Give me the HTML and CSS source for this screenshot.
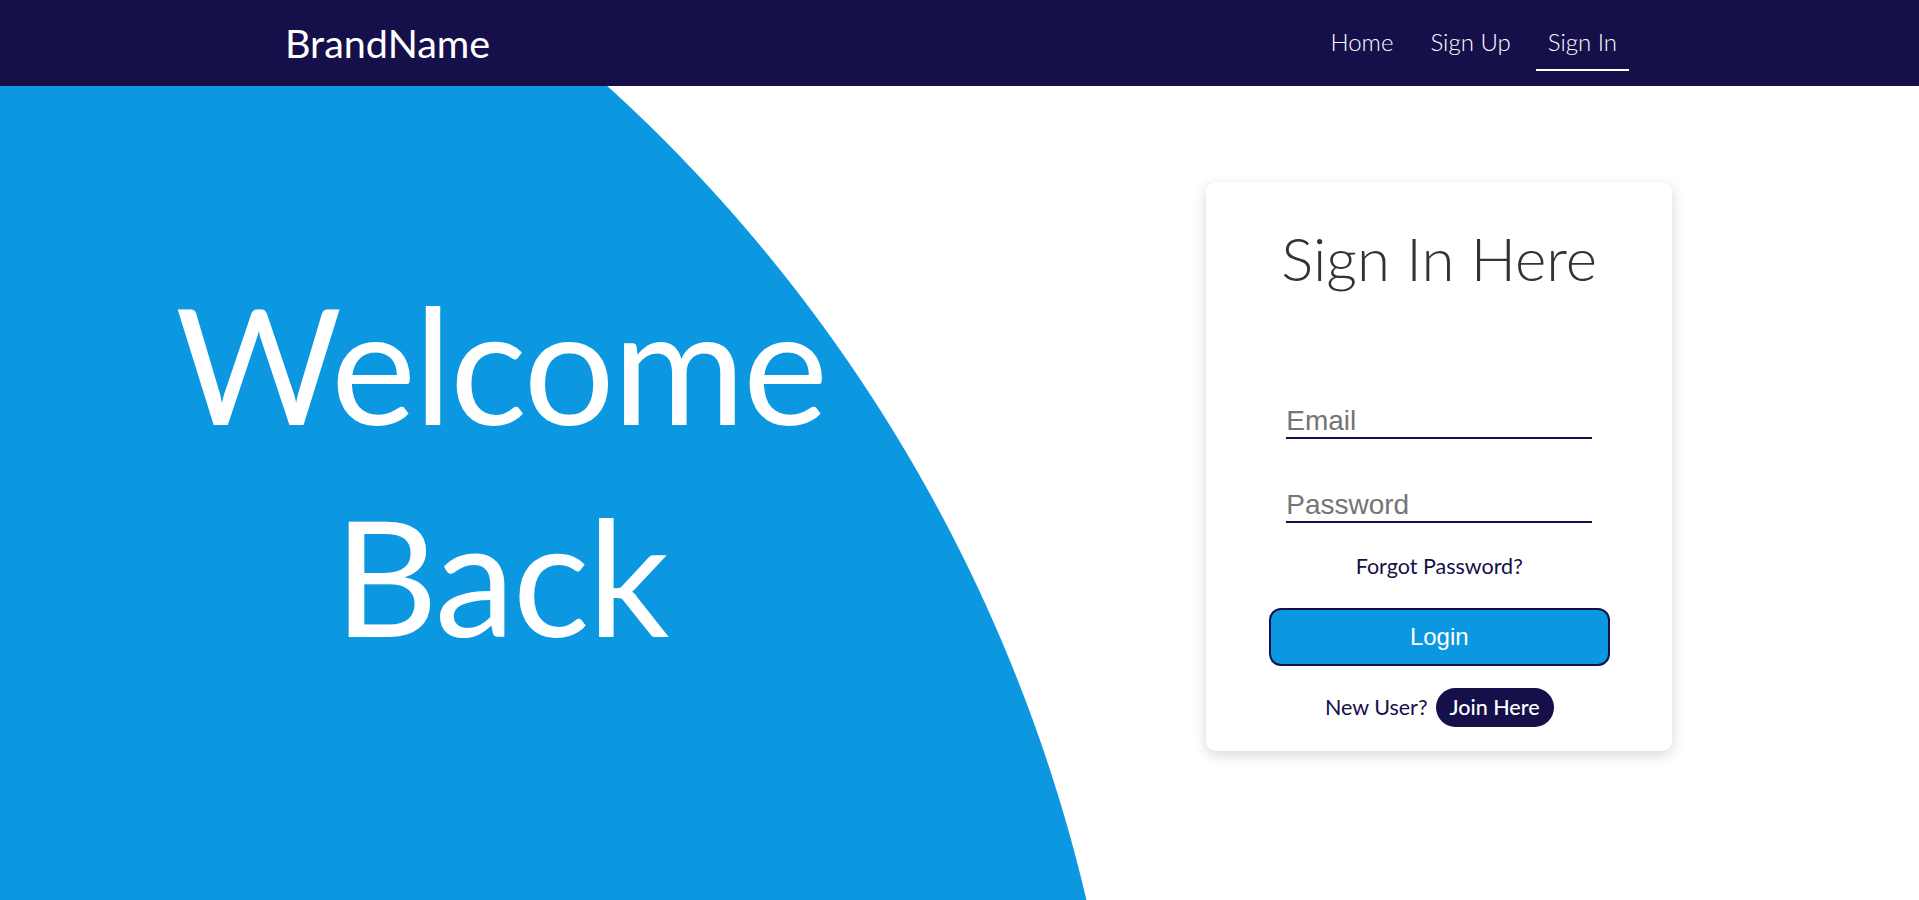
FILE: index.html
```html
<!DOCTYPE html>
<html lang="en">
<head>
<meta charset="utf-8">
<title>Sign In</title>
<link rel="stylesheet" href="styles.css">
</head>
<body>
<header class="navbar">
  <div class="nav-inner">
    <a class="brand" href="#">BrandName</a>
    <nav class="nav-links">
      <a href="#">Home</a>
      <a href="#">Sign Up</a>
      <a href="#" class="active">Sign In</a>
    </nav>
  </div>
</header>
<main class="hero">
  <section class="welcome">
    <h1 class="welcome-title">Welcome<br>Back</h1>
  </section>
  <section class="form-side">
    <form class="card">
      <h2 class="card-title">Sign In Here</h2>
      <input class="field field-email" type="email" placeholder="Email">
      <input class="field field-password" type="password" placeholder="Password">
      <a class="forgot" href="#">Forgot Password?</a>
      <button class="login-btn" type="button">Login</button>
      <p class="new-user">New User? <a class="join" href="#">Join Here</a></p>
    </form>
  </section>
</main>
</body>
</html>
```
FILE: styles.css
```css
* { box-sizing: border-box; }
html, body { margin: 0; padding: 0; }
body {
  font-family: Lato, "Open Sans", sans-serif;
  background: #ffffff;
  overflow: hidden;
}
a { text-decoration: none; }

.navbar {
  background: #150f4a;
  height: 86px;
}
.nav-inner {
  height: 86px;
  padding: 0 290px 0 285px;
  display: flex;
  justify-content: space-between;
  align-items: flex-start;
}
.brand {
  color: #ffffff;
  font-size: 39.5px;
  line-height: 48px;
  padding-top: 19px;
  font-weight: 400;
}
.nav-links {
  display: flex;
  gap: 13px;
}
.nav-links a {
  display: block;
  color: #ffffff;
  font-weight: 300;
  font-size: 24px;
  line-height: 29px;
  padding: 27px 12px 13px;
  border-bottom: 2px solid transparent;
}
.nav-links a.active { border-bottom-color: #ffffff; }

.hero {
  height: 814px;
  padding-bottom: 54px;
  display: grid;
  grid-template-columns: 1fr 1fr;
  align-items: center;
  background: radial-gradient(circle 1590.5px at -462px 1177.4px, #0c98e1 1590px, #ffffff 1591px);
}
.welcome { text-align: center; padding: 6px 0 0 42px; }
.welcome-title {
  margin: 0;
  color: #ffffff;
  font-weight: 400;
  font-size: 161px;
  line-height: 212px;
  letter-spacing: -2px;
}
.form-side { display: flex; justify-content: center; }
.card {
  width: 466px;
  height: 569px;
  background: #ffffff;
  border-radius: 10px;
  box-shadow: 0 4px 14px rgba(0, 0, 0, 0.16);
  padding: 40px 0 0;
  display: flex;
  flex-direction: column;
  align-items: center;
}
.card-title {
  margin: 0;
  color: #333333;
  font-weight: 300;
  font-size: 60px;
  line-height: 72px;
}
.field {
  width: 306px;
  font-family: "Liberation Sans", Arial, sans-serif;
  font-size: 28px;
  line-height: 32px;
  height: 34px;
  padding: 0;
  border: none;
  border-bottom: 2px solid #150f4a;
  outline: none;
  color: #333;
  background: transparent;
}
.field::placeholder { color: #757575; }
.field-email { margin-top: 111px; }
.field-password { margin-top: 50px; }
.forgot {
  margin-top: 31px;
  color: #150f4a;
  font-size: 21.5px;
  line-height: 25px;
}
.login-btn {
  margin-top: 29px;
  width: 341px;
  height: 58px;
  background: #0c98e1;
  border: 2px solid #150f4a;
  border-radius: 12px;
  color: #ffffff;
  font-family: "Liberation Sans", Arial, sans-serif;
  font-size: 24px;
}
.new-user {
  margin: 22px 0 0;
  color: #150f4a;
  font-size: 21.5px;
  line-height: 39px;
  display: flex;
  align-items: center;
  gap: 8px;
}
.join {
  display: inline-block;
  background: #150f4a;
  color: #ffffff;
  border-radius: 20px;
  padding: 6px 14px;
  line-height: 27px;
  font-size: 21.5px;
  font-weight: 500;
}
```
